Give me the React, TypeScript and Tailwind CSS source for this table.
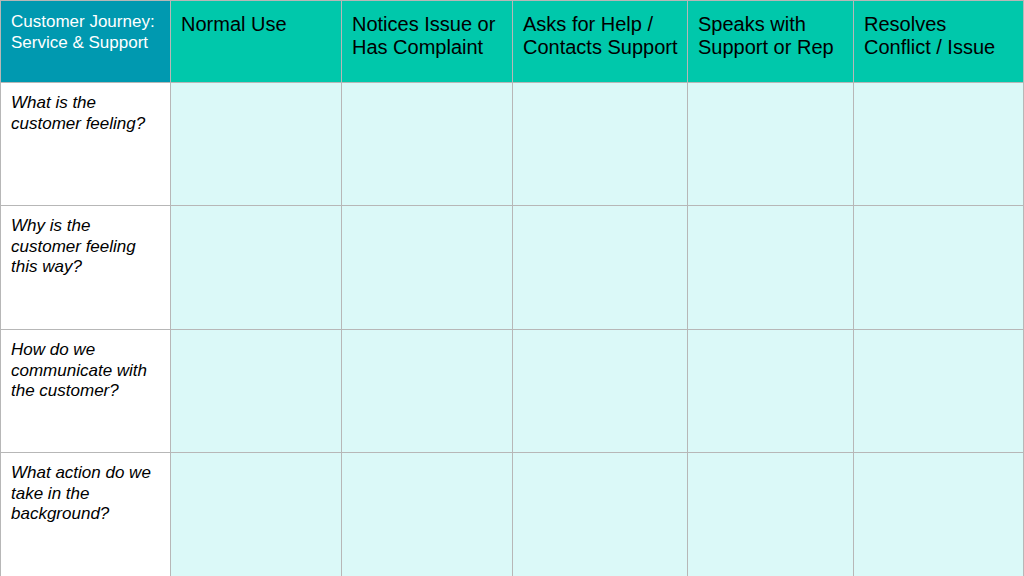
const stages = [
  ['Normal Use'],
  ['Notices Issue or', 'Has Complaint'],
  ['Asks for Help /', 'Contacts Support'],
  ['Speaks with', 'Support or Rep'],
  ['Resolves', 'Conflict / Issue'],
];

const questions = [
  ['What is the', 'customer feeling?'],
  ['Why is the', 'customer feeling', 'this way?'],
  ['How do we', 'communicate with', 'the customer?'],
  ['What action do we', 'take in the', 'background?'],
];

const rowHeights = ['h-[122px]', 'h-[123px]', 'h-[122px]', 'h-[123px]'];

export default function App() {
  return (
    <div className="w-[1024px] h-[576px] overflow-hidden bg-white" style={{ fontFamily: '"Liberation Sans", Arial, sans-serif' }}>
      <div className="grid grid-cols-[169px_170px_170px_174px_165px_169px] gap-px bg-[#b7b7b7] p-px pb-0">
        {/* header row */}
        <div className="h-[81px] bg-[#0099b0] text-white text-[17px] leading-[21px] pl-[10px] pt-[10px]">
          <div>Customer Journey:</div>
          <div>Service &amp; Support</div>
        </div>
        {stages.map((s, i) => (
          <div key={i} className="h-[81px] bg-[#00c8ab] text-black text-[20px] leading-[23px] pl-[10px] pt-[12px]">
            {s.map((l, j) => (
              <div key={j}>{l}</div>
            ))}
          </div>
        ))}

        {/* body rows */}
        {questions.map((q, r) => (
          <>
            <div key={`q${r}`} className={`${rowHeights[r]} bg-white text-black italic text-[17px] leading-[20.5px] pl-[10px] pt-[10px]`}>
              {q.map((l, j) => (
                <div key={j}>{l}</div>
              ))}
            </div>
            {stages.map((_, c) => (
              <div key={`c${r}-${c}`} className={`${rowHeights[r]} bg-[#dbf9f8]`} />
            ))}
          </>
        ))}
      </div>
    </div>
  );
}
